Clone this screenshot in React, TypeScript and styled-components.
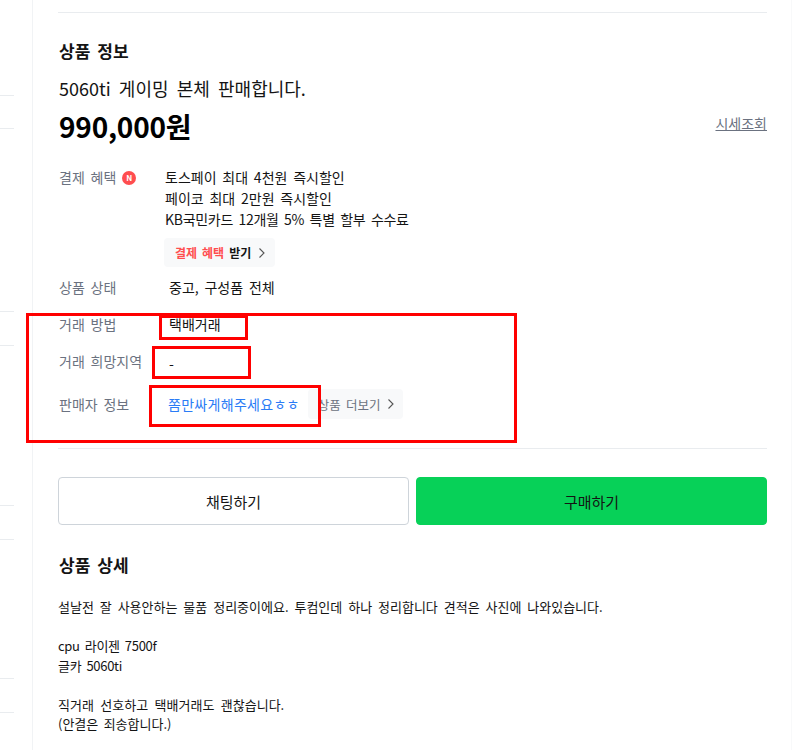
import * as React from 'react';
import styled, { createGlobalStyle } from 'styled-components';

const GlobalStyle = createGlobalStyle`
    html, body {
        margin: 0;
        padding: 0;
        background: #fff;
        overflow: hidden;
    }
    body {
        font-family: "Noto Sans CJK KR", "Noto Sans", sans-serif;
        color: #141414;
    }
    :where(#root) * {
        word-spacing: 0.19em;
    }
`;

const Page = styled.div`
    width: 812px;
    height: 750px;
    display: flex;
    overflow: hidden;
`;

const Sidebar = styled.div`
    width: 33px;
    flex-shrink: 0;
    box-sizing: border-box;
    border-right: 1px solid #f1f3f5;
`;

const SideLine = styled.div<{ $top: number }>`
    width: 14px;
    height: 1px;
    background: #e9ecef;
    margin-top: ${p => p.$top}px;
`;

const Main = styled.div`
    width: 759px;
    height: 750px;
    flex-shrink: 0;
    box-sizing: border-box;
    border-right: 1px solid #f8f9fa;
    padding: 12px 24px 0 25px;
    position: relative;
`;

const Divider = styled.div<{ $top?: number }>`
    height: 1px;
    background: #e9ecef;
    margin-top: ${p => p.$top ?? 0}px;
`;

const SectionTitle = styled.h2<{ $top: number }>`
    margin: ${p => p.$top}px 0 0;
    padding-left: 1px;
    font-size: 17px;
    line-height: 24px;
    font-weight: 700;
`;

const ProductName = styled.div`
    font-size: 18px;
    line-height: 28px;
    margin-top: 11px;
    padding-left: 1px;
    word-spacing: 0.23em;
`;

const PriceRow = styled.div`
    display: flex;
    justify-content: space-between;
    align-items: center;
    margin-top: 5px;
`;

const Price = styled.div`
    font-size: 28px;
    line-height: 38px;
    font-weight: 700;
    color: #000;
    padding-left: 1px;
    letter-spacing: -0.2px;
`;

const PriceLink = styled.a`
    font-size: 14px;
    line-height: 20px;
    color: #6b7280;
    text-decoration: underline;
    margin-bottom: 6px;
    word-spacing: 0;
`;

const InfoRow = styled.div<{ $top: number; $center?: boolean }>`
    display: flex;
    align-items: ${p => (p.$center ? 'center' : 'flex-start')};
    margin-top: ${p => p.$top}px;
`;

const Label = styled.div`
    width: 106px;
    flex-shrink: 0;
    box-sizing: border-box;
    padding-left: 1px;
    display: flex;
    align-items: center;
    gap: 6px;
    font-size: 14px;
    line-height: 21px;
    color: #6b7280;
`;

const NewBadge = styled.span`
    width: 14px;
    height: 14px;
    border-radius: 50%;
    background: #ff4d4f;
    color: #fff;
    font-size: 8px;
    line-height: 14px;
    font-weight: 700;
    text-align: center;
`;

const Value = styled.div<{ $indent?: number; $drop?: number }>`
    font-size: 14px;
    line-height: 21px;
    padding-left: ${p => p.$indent ?? 0}px;
    padding-top: ${p => p.$drop ?? 0}px;
`;

const NarrowLine = styled.span`
    letter-spacing: -0.3px;
`;

const PillButton = styled.div`
    display: inline-flex;
    align-items: center;
    height: 29px;
    box-sizing: border-box;
    padding: 0 9px 0 11px;
    margin-top: 8px;
    border-radius: 4px;
    background: #f8f9fa;
    font-size: 12px;
    font-weight: 700;
    gap: 7px;
`;

const Red = styled.span`
    color: #ff4d4f;
`;

const SellerLink = styled.div`
    font-size: 14px;
    line-height: 21px;
    color: #2b7cf6;
    padding-left: 4px;
    letter-spacing: 0.3px;
`;

const MorePill = styled.div`
    display: inline-flex;
    align-items: center;
    height: 30px;
    box-sizing: border-box;
    margin-left: 8px;
    padding: 0 8px 0 10px;
    border-radius: 4px;
    background: #f8f9fa;
    font-size: 12.5px;
    color: #6b7280;
    gap: 6px;
`;

const ButtonRow = styled.div`
    display: flex;
    gap: 7px;
    margin-top: 28px;
`;

const ActionButton = styled.div<{ $primary?: boolean }>`
    flex: 1;
    height: 48px;
    box-sizing: border-box;
    display: flex;
    align-items: center;
    justify-content: center;
    border-radius: 4px;
    font-size: 15px;
    color: #141414;
    background: ${p => (p.$primary ? '#07d158' : '#fff')};
    border: 1px solid ${p => (p.$primary ? '#07d158' : '#ced4da')};
`;

const DetailBody = styled.div`
    margin-top: 20px;
    font-size: 13px;
    line-height: 19.5px;
    white-space: pre-line;
    color: #141414;
`;

const WideLine = styled.span<{ $ws: number }>`
    word-spacing: ${p => p.$ws}em;
`;

const Mark = styled.div<{ $x: number; $y: number; $w: number; $h: number }>`
    position: absolute;
    box-sizing: border-box;
    border: 3px solid #ff0000;
    left: ${p => p.$x}px;
    top: ${p => p.$y}px;
    width: ${p => p.$w}px;
    height: ${p => p.$h}px;
`;

const Chevron = () => (
    <svg width="8" height="12" viewBox="0 0 8 12" fill="none">
        <path d="M1.5 1.5L6 6L1.5 10.5" stroke="#555" strokeWidth="1.1" />
    </svg>
);

const sideLines = [95, 33, 183, 34, 160, 34, 139, 34];

export default function App() {
    return (
        <Page>
            <GlobalStyle />
            <Sidebar>
                {sideLines.map((top, i) => (
                    <SideLine key={i} $top={i === 0 ? top : top - 1} />
                ))}
            </Sidebar>
            <Main>
                <Divider />
                <SectionTitle $top={26}>상품 정보</SectionTitle>
                <ProductName>5060ti 게이밍 본체 판매합니다.</ProductName>
                <PriceRow>
                    <Price>990,000원</Price>
                    <PriceLink>시세조회</PriceLink>
                </PriceRow>
                <InfoRow $top={22}>
                    <Label>결제 혜택<NewBadge>N</NewBadge></Label>
                    <div>
                        <Value $indent={1}>
                            토스페이 최대 4천원 즉시할인<br />
                            페이코 최대 2만원 즉시할인<br />
                            <NarrowLine>KB국민카드 12개월 5% 특별 할부 수수료</NarrowLine>
                        </Value>
                        <PillButton><span><Red>결제 혜택</Red> 받기</span><Chevron /></PillButton>
                    </div>
                </InfoRow>
                <InfoRow $top={10}>
                    <Label>상품 상태</Label>
                    <Value $indent={5}>중고, 구성품 전체</Value>
                </InfoRow>
                <InfoRow $top={16}>
                    <Label>거래 방법</Label>
                    <Value $indent={5}>택배거래</Value>
                </InfoRow>
                <InfoRow $top={16}>
                    <Label>거래 희망지역</Label>
                    <Value $indent={5} $drop={2}>-</Value>
                </InfoRow>
                <InfoRow $top={15} $center>
                    <Label>판매자 정보</Label>
                    <SellerLink>쫌만싸게해주세요ㅎㅎ</SellerLink>
                    <MorePill>상품 더보기<Chevron /></MorePill>
                </InfoRow>
                <Divider $top={29} />
                <ButtonRow>
                    <ActionButton>채팅하기</ActionButton>
                    <ActionButton $primary>구매하기</ActionButton>
                </ButtonRow>
                <SectionTitle $top={28}>상품 상세</SectionTitle>
                <DetailBody>
                    <WideLine $ws={0.23}>설날전 잘 사용안하는 물품 정리중이에요. 투컴인데 하나 정리합니다 견적은 사진에 나와있습니다.</WideLine>
                    {'\n\n'}
                    <NarrowLine>cpu 라이젠 7500f</NarrowLine>
                    {'\n'}
                    <NarrowLine>글카 5060ti</NarrowLine>
                    {'\n\n'}
                    <WideLine $ws={0.27}>직거래 선호하고 택배거래도 괜찮습니다.</WideLine>
                    {'\n'}
                    (안결은 죄송합니다.)
                </DetailBody>
                <Mark $x={-7} $y={313} $w={491} $h={130} />
                <Mark $x={126} $y={315} $w={89} $h={25} />
                <Mark $x={119} $y={346} $w={99} $h={33} />
                <Mark $x={116} $y={385} $w={172} $h={42} />
            </Main>
        </Page>
    );
}
